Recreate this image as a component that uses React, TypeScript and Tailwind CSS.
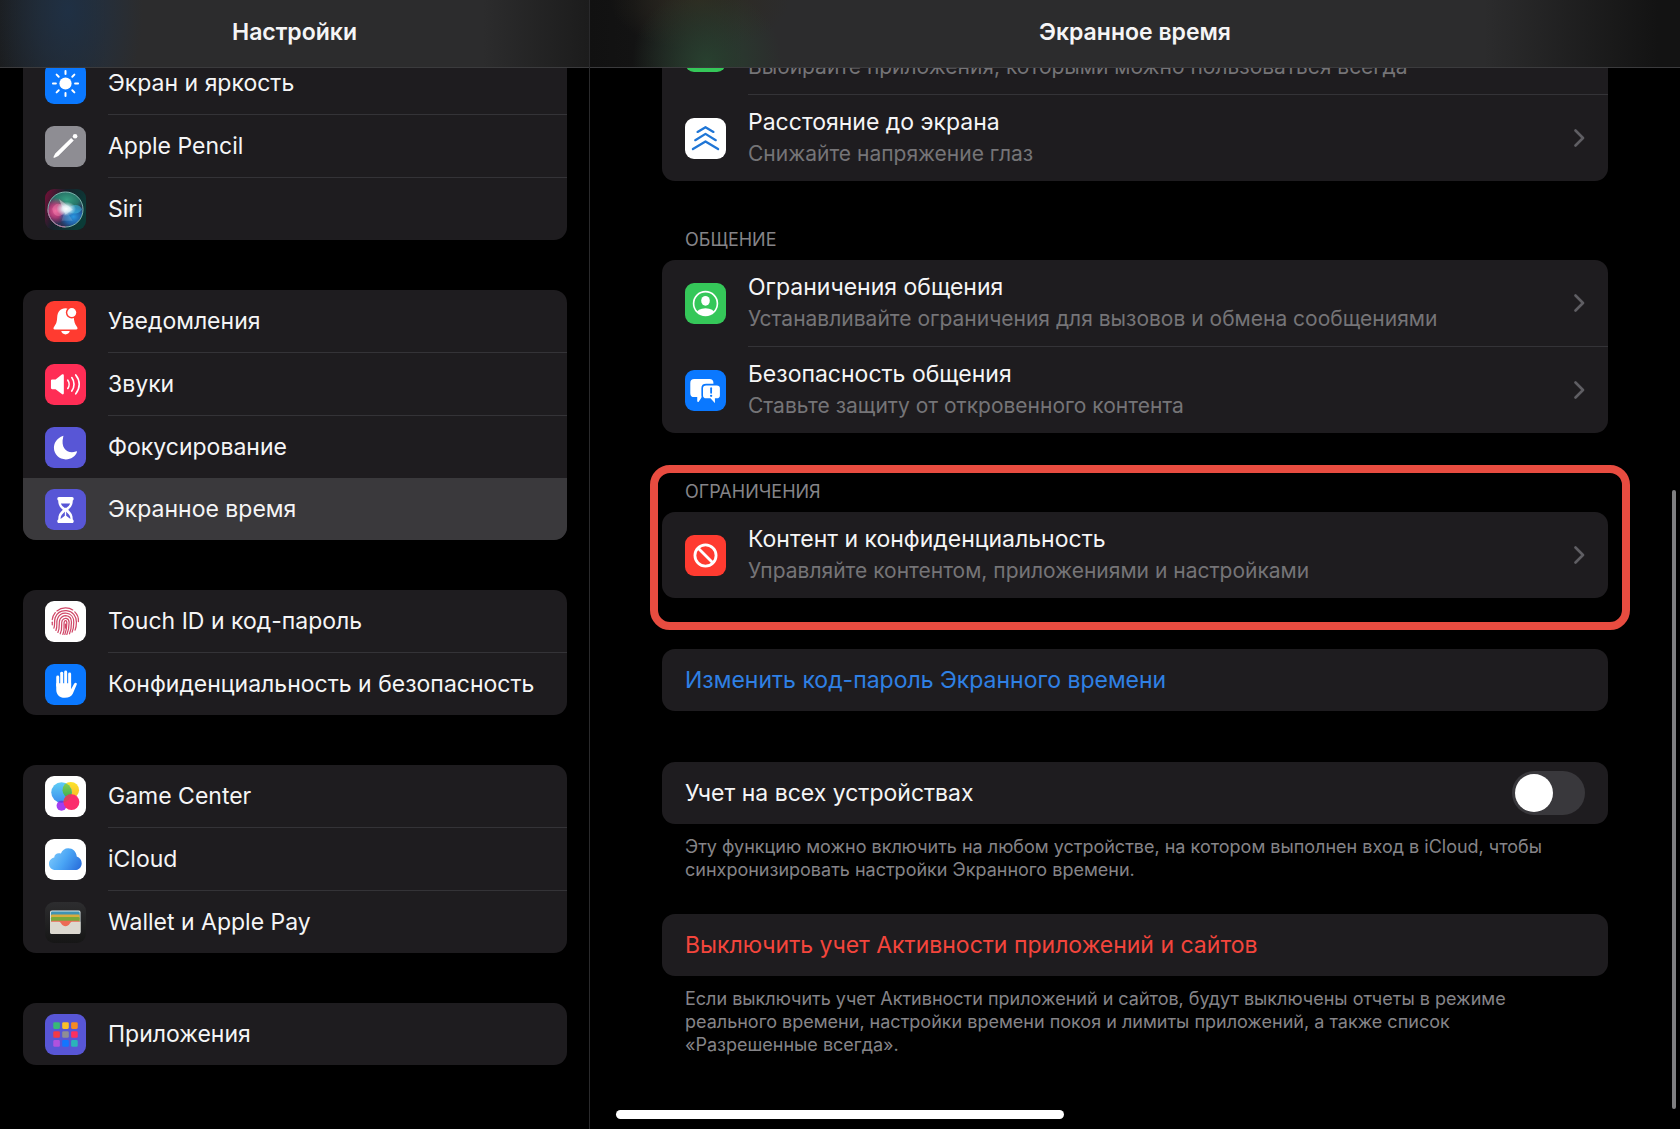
import type { ReactNode } from "react";

const Tile = ({ className, children }: { className: string; children?: ReactNode }) => (
  <svg viewBox="0 0 124 124" aria-hidden="true" className={`size-[41px] shrink-0 rounded-[9px] ${className}`}>
    {children}
  </svg>
);

const SunIcon = () => (
  <Tile className="bg-[#0a78ff]">
    <circle cx="62" cy="62" r="18.5" fill="#fff" />
    {[0, 45, 90, 135, 180, 225, 270, 315].map((angle) => (
      <path
        key={angle}
        d="M62 33V24"
        stroke="#fff"
        strokeWidth="6"
        strokeLinecap="round"
        transform={`rotate(${angle} 62 62)`}
      />
    ))}
  </Tile>
);

const PencilIcon = () => (
  <Tile className="bg-[#8e8d93]">
    <circle cx="91" cy="31" r="7" fill="#fff" />
    <path d="M79 36 87 44 40 91 29 96C26 97 25 95 26 93L31 83Z" fill="#fff" />
  </Tile>
);

const SiriIcon = () => (
  <Tile className="bg-[#1c1b1e]">
    <defs>
      <linearGradient id="siri-bg" x1="0" y1="0" x2="1" y2="0.4">
        <stop offset="0" stopColor="#7a0f38" />
        <stop offset="0.45" stopColor="#16202a" />
        <stop offset="1" stopColor="#0b3b37" />
      </linearGradient>
      <radialGradient id="siri-pink" cx="0.5" cy="0.5" r="0.5">
        <stop offset="0" stopColor="#ee5c98" />
        <stop offset="0.5" stopColor="#c83c7c" stopOpacity="0.8" />
        <stop offset="1" stopColor="#c02a6b" stopOpacity="0" />
      </radialGradient>
      <radialGradient id="siri-green" cx="0.5" cy="0.5" r="0.5">
        <stop offset="0" stopColor="#379f83" />
        <stop offset="0.6" stopColor="#26876d" stopOpacity="0.8" />
        <stop offset="1" stopColor="#1f7f66" stopOpacity="0" />
      </radialGradient>
      <radialGradient id="siri-blue" cx="0.5" cy="0.5" r="0.5">
        <stop offset="0" stopColor="#2a98e2" />
        <stop offset="0.6" stopColor="#1c72c4" stopOpacity="0.7" />
        <stop offset="1" stopColor="#155fae" stopOpacity="0" />
      </radialGradient>
      <radialGradient id="siri-glow" cx="0.5" cy="0.5" r="0.5">
        <stop offset="0" stopColor="#fff" />
        <stop offset="0.4" stopColor="#eafaff" stopOpacity="0.85" />
        <stop offset="1" stopColor="#cfe9f2" stopOpacity="0" />
      </radialGradient>
      <clipPath id="siri-orb">
        <circle cx="62" cy="62" r="53" />
      </clipPath>
    </defs>
    <rect width="124" height="124" fill="url(#siri-bg)" />
    <g clipPath="url(#siri-orb)">
      <rect width="124" height="124" fill="#2c3355" />
      <ellipse cx="66" cy="32" rx="58" ry="38" fill="url(#siri-green)" />
      <ellipse cx="32" cy="66" rx="40" ry="40" fill="url(#siri-pink)" />
      <ellipse cx="86" cy="84" rx="44" ry="38" fill="url(#siri-blue)" />
      <path d="M22 60C34 30 60 50 66 64C50 86 26 90 22 60Z" fill="#f58ab4" fillOpacity="0.4" />
      <path d="M64 64C82 44 104 44 112 62C100 80 82 76 64 64Z" fill="#3fc6e8" fillOpacity="0.5" />
      <path d="M42 30 84 62 62 78Z" fill="#fff" fillOpacity="0.4" />
      <path d="M62 62 84 96 50 96Z" fill="#fff" fillOpacity="0.15" />
      <ellipse cx="64" cy="60" rx="30" ry="22" fill="url(#siri-glow)" />
    </g>
    <circle cx="62" cy="62" r="53" fill="none" stroke="#7fb5ad" strokeWidth="3" />
    <path d="M9 62A53 53 0 0 0 62 115" fill="none" stroke="#b9739f" strokeWidth="3" />
  </Tile>
);

const BellIcon = () => (
  <Tile className="bg-[#ff3b30]">
    <path d="M62 22C46 22 38 34 37 48C36 64 34 70 28 77C24 82 25 86 30 86H94C99 86 100 82 96 77C90 70 88 62 87 48C86 34 78 22 62 22Z" fill="#fff" />
    <path d="M49 91H75C73 98 68 101 62 101C56 101 51 98 49 91Z" fill="#fff" />
    <circle cx="81" cy="35" r="18" fill="#ff3b30" />
    <circle cx="81" cy="35" r="13.5" fill="#fff" />
  </Tile>
);

const SpeakerIcon = () => (
  <Tile className="bg-[#ff2d55]">
    <path d="M22 47H32L51 32C54 30 57 31 57 35V88C57 92 54 93 51 91L32 76H22C19 76 18 74 18 72V51C18 49 19 47 22 47Z" fill="#fff" />
    <g fill="none" stroke="#fff" strokeWidth="5" strokeLinecap="round">
      <path d="M69 49C74 56 74 67 69 74" />
      <path d="M81 41C90 53 90 70 81 82" />
      <path d="M93 33C107 50 107 73 93 90" />
    </g>
  </Tile>
);

const MoonIcon = () => (
  <Tile className="bg-[#5856d6]">
    <path d="M54 27C37 33 27 47 27 63C27 83 43 98 63 98C79 98 92 89 97 75C96 73 95 73 93 74C70 82 46 66 55 30C56 28 56 26 54 27Z" fill="#fff" />
  </Tile>
);

const HourglassIcon = () => (
  <Tile className="bg-[#5856d6]">
    <path
      fill="#fff"
      fillRule="evenodd"
      d="M42 24H82C88 24 88 33 84 35C84 48 80 54 70 63C80 72 84 79 84 92C88 94 88 103 82 103H42C36 103 36 94 40 92C40 79 44 72 54 63C44 54 40 48 40 35C36 33 36 24 42 24ZM48 44C50 50 54 53 59 57C61 59 63 59 65 57C70 53 74 50 76 44ZM60 69C52 76 47 81 47 91L59 82C61 80 63 80 65 82L77 91C77 81 72 76 64 69C63 68 61 68 60 69Z"
    />
    <path d="M62 57V84" stroke="#fff" strokeWidth="4" />
  </Tile>
);

const TouchIdIcon = () => (
  <Tile className="bg-white">
    <g fill="none" stroke="#d04868" strokeWidth="3.8" strokeLinecap="round">
      <path d="M36 30C52 18 72 19 84 27" />
      <path d="M90 33C98 41 102 52 101 62" />
      <path d="M22 56C23 47 26 41 31 35" />
      <path d="M22 64V72" />
      <path d="M27 82C31 70 27 62 31 50C37 34 51 28 65 29C84 31 95 46 95 64C95 74 94 80 91 88" />
      <path d="M33 89C39 74 33 64 38 53C43 41 53 36 64 37C79 38 87 50 87 64C87 78 85 87 82 94" />
      <path d="M39 95C47 78 40 67 45 56C49 48 56 44 63 44C73 45 80 53 80 64C80 80 78 90 74 99" />
      <path d="M46 99C55 83 47 69 52 59C57 49 72 50 73 64C73 80 71 90 66 101" />
      <path d="M54 101C61 88 56 74 58 64C60 57 66 58 66 66C66 80 64 92 60 101" />
      <path d="M62 70V82" />
    </g>
  </Tile>
);

const HandIcon = () => (
  <Tile className="bg-[#0a78ff]">
    <path d="M34 58H79V76L88 60C91 54 98 56 96 62L84 90C80 98 72 102 60 102C43 102 34 92 34 76Z" fill="#fff" />
    <g stroke="#fff" strokeWidth="9" strokeLinecap="round">
      <path d="M38.500 39V66" />
      <path d="M50.500 28V66" />
      <path d="M62.500 24V66" />
      <path d="M74.500 30V66" />
    </g>
  </Tile>
);

const GameCenterIcon = () => (
  <Tile className="bg-white">
    <defs>
      <linearGradient id="gc-blue" x1="0" y1="0" x2="0" y2="1">
        <stop offset="0" stopColor="#5fcdf5" />
        <stop offset="1" stopColor="#3c8fee" />
      </linearGradient>
      <linearGradient id="gc-green" x1="0" y1="0" x2="0" y2="1">
        <stop offset="0" stopColor="#8fd04c" />
        <stop offset="1" stopColor="#35ad5a" />
      </linearGradient>
      <linearGradient id="gc-yellow" x1="0" y1="0" x2="0" y2="1">
        <stop offset="0" stopColor="#fbe52c" />
        <stop offset="1" stopColor="#fbb72a" />
      </linearGradient>
      <clipPath id="gc-clip">
        <circle cx="50" cy="50" r="31" />
      </clipPath>
    </defs>
    <circle cx="78" cy="43" r="25" fill="url(#gc-yellow)" />
    <circle cx="50" cy="50" r="31" fill="url(#gc-blue)" />
    <circle cx="78" cy="43" r="25" fill="url(#gc-green)" clipPath="url(#gc-clip)" />
    <circle cx="50" cy="90" r="15" fill="#a43df0" />
    <circle cx="50" cy="90" r="15" fill="#5a45e0" clipPath="url(#gc-clip)" />
    <circle cx="80" cy="79" r="24" fill="#fb2d6c" />
    <circle cx="80" cy="79" r="24" fill="#d8455c" clipPath="url(#gc-clip)" />
  </Tile>
);

const CloudIcon = () => (
  <Tile className="bg-white">
    <defs>
      <linearGradient id="cloud" x1="0" y1="0.3" x2="1" y2="0.7">
        <stop offset="0" stopColor="#7cc8fb" />
        <stop offset="0.5" stopColor="#4aa5f5" />
        <stop offset="1" stopColor="#2b72dd" />
      </linearGradient>
    </defs>
    <path d="M32 94C20 94 12 86 12 75C12 65 19 58 28 56C28 46 38 40 48 44C52 34 60 28 70 28C84 28 95 38 96 53C105 56 111 64 111 73C111 85 102 94 90 94Z" fill="url(#cloud)" />
  </Tile>
);

const WalletIcon = () => (
  <Tile className="bg-linear-to-b from-[#2d2d2f] to-[#161616]">
    <defs>
      <clipPath id="wallet">
        <rect x="15" y="25" width="93" height="72" rx="7" />
      </clipPath>
    </defs>
    <g clipPath="url(#wallet)">
      <rect x="15" y="25" width="93" height="72" fill="#d9e6e8" />
      <rect x="18" y="29" width="87" height="20" rx="4" fill="#3f93b4" />
      <rect x="18" y="38" width="87" height="20" rx="4" fill="#d9ab3e" />
      <rect x="18" y="45" width="87" height="20" rx="4" fill="#79a83a" />
      <rect x="18" y="57" width="87" height="30" rx="4" fill="#ec6a55" />
      <path d="M15 60H40C45 60 47 62 49 65C55 76 69 76 75 65C77 62 79 60 84 60H108V97H15Z" fill="#dcd8cf" />
    </g>
  </Tile>
);

const appColors = ["#38b878", "#fbbf2b", "#f68b22", "#f23a46", "#8f8e95", "#fb2f60", "#af52de", "#1276ff", "#2bb3ba"];

const AppsIcon = () => (
  <Tile className="bg-[#5856d6]">
    {appColors.map((color, i) => (
      <rect key={color} x={25 + (i % 3) * 27} y={25 + Math.floor(i / 3) * 27} width="20" height="20" rx="4" fill={color} />
    ))}
  </Tile>
);

const DistanceIcon = () => (
  <Tile className="bg-white">
    <g fill="none" stroke="#1f76d6" strokeWidth="7" strokeLinecap="round" strokeLinejoin="round">
      <path d="M38 42 62 28 86 42" />
      <path d="M31 67 62 48 93 67" />
      <path d="M24 94 62 71 100 94" />
    </g>
  </Tile>
);

const ContactIcon = () => (
  <Tile className="bg-[#35c759]">
    <defs>
      <clipPath id="contact">
        <circle cx="62" cy="62" r="36" />
      </clipPath>
    </defs>
    <circle cx="62" cy="62" r="36" fill="none" stroke="#fff" strokeWidth="5" />
    <ellipse cx="62" cy="54" rx="13" ry="15" fill="#fff" />
    <ellipse cx="62" cy="94" rx="28" ry="18" fill="#fff" clipPath="url(#contact)" />
  </Tile>
);

const ChatIcon = () => (
  <Tile className="bg-[#0a78ff]">
    <path d="M28 27H74C82 27 86 31 86 39V70C86 78 82 82 74 82H51L42 95C40 98 37 97 37 94V82H28C20 82 16 78 16 70V39C16 31 20 27 28 27Z" fill="#fff" />
    <path
      d="M64 44H96C104 44 108 48 108 55V77C108 84 104 88 96 88H93V98C93 102 90 103 87 100L76 88H64C56 88 52 84 52 77V55C52 48 56 44 64 44Z"
      fill="#fff"
      stroke="#0a78ff"
      strokeWidth="5"
    />
    <path d="M79 55V69" stroke="#0a78ff" strokeWidth="5.500" strokeLinecap="round" />
    <circle cx="79" cy="78" r="3.500" fill="#0a78ff" />
  </Tile>
);

const BanIcon = () => (
  <Tile className="bg-[#ff3b30]">
    <circle cx="62" cy="62" r="32" fill="none" stroke="#fff" strokeWidth="8.500" />
    <path d="M40 40 84 84" stroke="#fff" strokeWidth="8.500" />
  </Tile>
);

const Chevron = () => (
  <svg viewBox="0 0 11 18" aria-hidden="true" className="h-[18px] w-[11px] shrink-0">
    <path d="M1.500 1.500 9 9 1.500 16.500" fill="none" stroke="#5f5e63" strokeWidth="2.6" strokeLinecap="round" strokeLinejoin="round" />
  </svg>
);

const menu = [
  [
    { label: "Экран и яркость", icon: <SunIcon /> },
    { label: "Apple Pencil", icon: <PencilIcon /> },
    { label: "Siri", icon: <SiriIcon /> },
  ],
  [
    { label: "Уведомления", icon: <BellIcon /> },
    { label: "Звуки", icon: <SpeakerIcon /> },
    { label: "Фокусирование", icon: <MoonIcon /> },
    { label: "Экранное время", icon: <HourglassIcon />, active: true },
  ],
  [
    { label: "Touch ID и код-пароль", icon: <TouchIdIcon /> },
    { label: "Конфиденциальность и безопасность", icon: <HandIcon /> },
  ],
  [
    { label: "Game Center", icon: <GameCenterIcon /> },
    { label: "iCloud", icon: <CloudIcon /> },
    { label: "Wallet и Apple Pay", icon: <WalletIcon /> },
  ],
  [{ label: "Приложения", icon: <AppsIcon /> }],
];

const MenuGroup = ({ items }: { items: { label: string; icon: ReactNode; active?: boolean }[] }) => (
  <ul className="overflow-hidden rounded-[13px] bg-[#1e1c1f]">
    {items.map(({ label, icon, active }, i) => (
      <li key={label}>
        {i > 0 && !active && <div className="ml-[85px] h-px bg-[#343337]" />}
        <a
          href="#"
          aria-current={active ? "page" : undefined}
          className={`flex h-[62px] items-center gap-[22px] pl-[22px] ${active ? "bg-[#3a393c]" : ""}`}
        >
          {icon}
          <span className="whitespace-nowrap">{label}</span>
        </a>
      </li>
    ))}
  </ul>
);

const DetailRow = ({ title, text, icon }: { title: string; text: string; icon: ReactNode }) => (
  <a href="#" className="flex items-center gap-[22px] px-[23px] py-[11px]">
    {icon}
    <div className="flex-1">
      <p className="leading-8">{title}</p>
      <p className="text-[21px] leading-8 text-[#757477]">{text}</p>
    </div>
    <Chevron />
  </a>
);

const Divider = () => <div className="ml-[86px] h-px bg-[#343337]" />;

const App = () => {
  return (
    <div className="relative grid min-h-screen grid-cols-[59fr_109fr] bg-black font-['Inter',sans-serif] text-[23px] text-[#f5f5f6]">
      <aside className="border-r border-[#2a2a2c]">
        <header className="relative z-10 h-17 border-b border-[#3b3b3d] bg-[#2c2c2d] bg-[radial-gradient(ellipse_75px_130px_at_68px_10px,#1f3044,#1f304499_45%,transparent),linear-gradient(90deg,#1b1d1f,transparent_18%,transparent_82%,#1c1c1c)]">
          <h1 className="text-center font-semibold leading-16">Настройки</h1>
        </header>
        <nav className="-mt-4 flex flex-col gap-[50px] pb-16 pl-[23px] pr-[22px]">
          {menu.map((items) => (
            <MenuGroup key={items[0].label} items={items} />
          ))}
        </nav>
      </aside>

      <main>
        <header className="relative z-10 h-17 border-b border-[#3b3b3d] bg-[#2c2c2d] bg-[radial-gradient(ellipse_75px_75px_at_117px_62px,#28402f,transparent),radial-gradient(ellipse_90px_50px_at_110px_0px,#2e2a20,transparent),linear-gradient(90deg,#111111,#131313_4%,transparent_14%,transparent_82%,#131313_98%)]">
          <h2 className="text-center font-semibold leading-16">Экранное время</h2>
        </header>
        <div className="-mt-[60px] px-[72px] pb-[68px]">
          <section className="overflow-hidden rounded-[13px] bg-[#1e1c1f]">
            <DetailRow
              title="Разрешенные всегда"
              text="Выбирайте приложения, которыми можно пользоваться всегда"
              icon={<Tile className="bg-[#35c759]" />}
            />
            <Divider />
            <DetailRow title="Расстояние до экрана" text="Снижайте напряжение глаз" icon={<DistanceIcon />} />
          </section>

          <section className="pt-[47px]">
            <h3 className="px-[23px] pb-2 text-[18px] leading-6 text-[#858488]">ОБЩЕНИЕ</h3>
            <div className="overflow-hidden rounded-[13px] bg-[#1e1c1f]">
              <DetailRow
                title="Ограничения общения"
                text="Устанавливайте ограничения для вызовов и обмена сообщениями"
                icon={<ContactIcon />}
              />
              <Divider />
              <DetailRow title="Безопасность общения" text="Ставьте защиту от откровенного контента" icon={<ChatIcon />} />
            </div>
          </section>

          <section className="relative pt-[47px]">
            <div className="pointer-events-none absolute -bottom-8 -left-3 -right-[22px] top-8 rounded-[20px] border-8 border-[#e84c40]" />
            <h3 className="px-[23px] pb-2 text-[18px] leading-6 text-[#858488]">ОГРАНИЧЕНИЯ</h3>
            <div className="overflow-hidden rounded-[13px] bg-[#1e1c1f]">
              <DetailRow
                title="Контент и конфиденциальность"
                text="Управляйте контентом, приложениями и настройками"
                icon={<BanIcon />}
              />
            </div>
          </section>

          <button type="button" className="mt-[51px] block h-[62px] w-full rounded-[13px] bg-[#1e1c1f] px-[23px] text-left text-[#2f80e4]">
            Изменить код-пароль Экранного времени
          </button>

          <label className="mt-[51px] flex h-[62px] items-center justify-between rounded-[13px] bg-[#1e1c1f] px-[23px]">
            Учет на всех устройствах
            <input
              type="checkbox"
              role="switch"
              className="h-11 w-[73px] appearance-none rounded-full bg-[#39383c] p-[3px] before:block before:size-[38px] before:rounded-full before:bg-white checked:bg-[#34c759] checked:before:ml-[29px]"
            />
          </label>
          <p className="px-[23px] pt-[11px] text-[18px] leading-[23px] text-[#858488]">
            Эту функцию можно включить на любом устройстве, на котором выполнен вход в iCloud, чтобы
            синхронизировать настройки Экранного времени.
          </p>

          <button type="button" className="mt-[33px] block h-[62px] w-full rounded-[13px] bg-[#1e1c1f] px-[23px] text-left text-[#f4453c]">
            Выключить учет Активности приложений и сайтов
          </button>
          <p className="px-[23px] pt-[11px] text-[18px] leading-[23px] text-[#858488]">
            Если выключить учет Активности приложений и сайтов, будут выключены отчеты в режиме
            реального времени, настройки времени покоя и лимиты приложений, а также список
            «Разрешенные всегда».
          </p>
        </div>
      </main>

      {/* scroll indicator and home bar float above the panes */}
      <div className="absolute bottom-5 right-1 top-[490px] w-1 rounded-full bg-[#7f7f81]" />
      <div className="absolute bottom-[10px] left-1/2 h-[9px] w-[448px] -translate-x-1/2 rounded-full bg-white" />
    </div>
  );
};

export default App;
